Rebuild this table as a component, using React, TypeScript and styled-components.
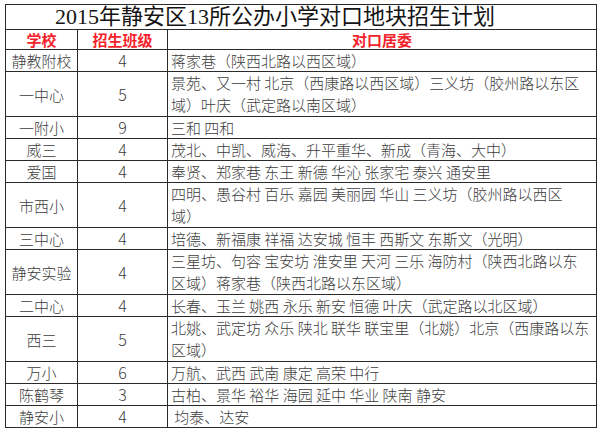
import React from "react";
import styled, { createGlobalStyle } from "styled-components";

const GlobalStyle = createGlobalStyle`
  html, body {
    margin: 0;
    padding: 0;
    background: #ffffff;
  }
`;

const Page = styled.div`
  width: 599px;
  height: 431px;
  padding: 4px 0 0 5px;
  box-sizing: border-box;
  background: #fff;
  overflow: hidden;
`;

const Sheet = styled.table`
  width: 591px;
  table-layout: fixed;
  border-collapse: collapse;
  font-family: "Noto Sans CJK SC", "Noto Sans", sans-serif;
  font-weight: 300;
  color: #3c3c3c;
`;

const Cell = styled.td<{ $align?: "left" | "center"; $size?: number }>`
  border: 1px solid #2a2a2a;
  padding: 0 0 0 ${(p) => (p.$align === "left" ? "3px" : "0")};
  text-align: ${(p) => p.$align || "center"};
  font-size: ${(p) => p.$size || 15}px;
  line-height: 21px;
  height: 21px;
  white-space: nowrap;
  overflow: hidden;
  vertical-align: middle;
`;

const TitleCell = styled.td`
  border: 1px solid #2a2a2a;
  height: 24px;
  padding: 0 0 0 49px;
  text-align: left;
  font-family: "Liberation Serif", "Noto Sans CJK SC", serif;
  font-size: 22px;
  font-weight: 400;
  line-height: 24px;
  color: #141414;
  white-space: nowrap;
`;

const HeadCell = styled.td`
  border: 1px solid #2a2a2a;
  height: 19px;
  padding: 0;
  text-align: center;
  font-size: 15px;
  line-height: 19px;
  font-weight: 700;
  color: #f4232b;
`;

const Lines = styled.div<{ $double: boolean }>`
  line-height: ${(p) => (p.$double ? "22px" : "21px")};
`;

type Row = { school: string; classes: string; area: string[] };

const rows: Row[] = [
  { school: "静教附校", classes: "4", area: ["蒋家巷（陕西北路以西区域）"] },
  {
    school: "一中心",
    classes: "5",
    area: ["景苑、又一村 北京（西康路以西区域）三义坊（胶州路以东区", "域）叶庆（武定路以南区域）"],
  },
  { school: "一附小", classes: "9", area: ["三和  四和"] },
  { school: "威三", classes: "4", area: ["茂北、中凯、威海、升平重华、新成（青海、大中）"] },
  { school: "爱国", classes: "4", area: ["奉贤、郑家巷 东王 新德 华沁 张家宅 泰兴 通安里"] },
  {
    school: "市西小",
    classes: "4",
    area: ["四明、愚谷村 百乐 嘉园 美丽园 华山 三义坊（胶州路以西区", "域）"],
  },
  { school: "三中心", classes: "4", area: ["培德、新福康 祥福 达安城 恒丰 西斯文 东斯文（光明）"] },
  {
    school: "静安实验",
    classes: "4",
    area: ["三星坊、句容 宝安坊 淮安里 天河 三乐 海防村（陕西北路以东", "区域）蒋家巷（陕西北路以东区域）"],
  },
  { school: "二中心", classes: "4", area: ["长春、玉兰 姚西 永乐 新安 恒德 叶庆（武定路以北区域）"] },
  {
    school: "西三",
    classes: "5",
    area: ["北姚、武定坊 众乐 陕北 联华 联宝里（北姚）北京（西康路以东", "区域）"],
  },
  { school: "万小", classes: "6", area: ["万航、武西 武南 康定 高荣 中行"] },
  { school: "陈鹤琴", classes: "3", area: ["古柏、景华 裕华 海园 延中 华业 陕南 静安"] },
  { school: "静安小", classes: "4", area: ["\u00a0均泰、达安"] },
];

const App: React.FC = () => {
  return (
    <Page>
      <GlobalStyle />
      <Sheet>
        <colgroup>
          <col style={{ width: 72 }} />
          <col style={{ width: 90 }} />
          <col style={{ width: 429 }} />
        </colgroup>
        <tbody>
          <tr>
            <TitleCell colSpan={3}>2015年静安区13所公办小学对口地块招生计划</TitleCell>
          </tr>
          <tr>
            <HeadCell>学校</HeadCell>
            <HeadCell>招生班级</HeadCell>
            <HeadCell>对口居委</HeadCell>
          </tr>
          {rows.map((r) => (
            <tr key={r.school}>
              <Cell>{r.school}</Cell>
              <Cell $size={16}>{r.classes}</Cell>
              <Cell $align="left">
                <Lines $double={r.area.length > 1}>
                  {r.area.map((line, i) => (
                    <div key={i}>{line}</div>
                  ))}
                </Lines>
              </Cell>
            </tr>
          ))}
        </tbody>
      </Sheet>
    </Page>
  );
};

export default App;
